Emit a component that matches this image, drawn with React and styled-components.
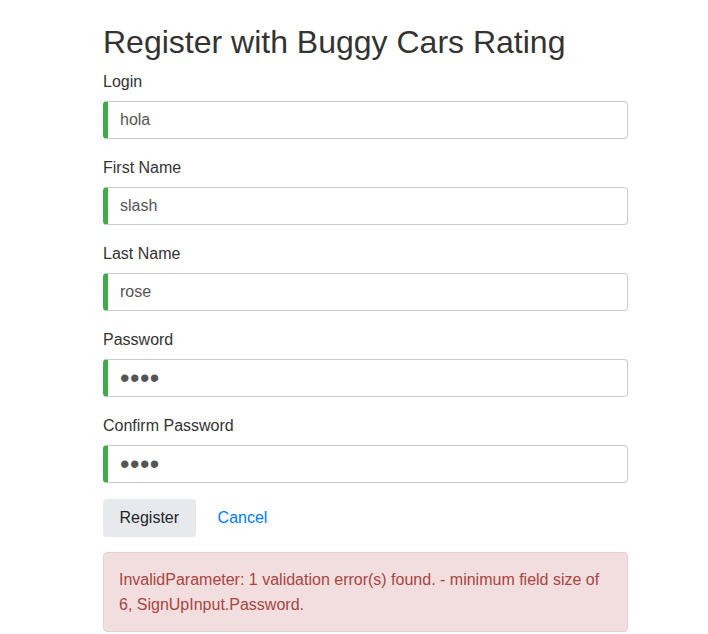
import styled, { createGlobalStyle } from "styled-components";

const GlobalStyle = createGlobalStyle`
  body {
    margin: 0;
    background: #fff;
    font-family: "Liberation Sans", Arial, sans-serif;
    font-size: 16px;
    line-height: 1.5;
    color: #333;
  }
  * { box-sizing: border-box; }
`;

const fields = [
  { id: "login", label: "Login", value: "hola", type: "text" },
  { id: "firstName", label: "First Name", value: "slash", type: "text" },
  { id: "lastName", label: "Last Name", value: "rose", type: "text" },
  { id: "password", label: "Password", value: "hola", type: "password" },
  { id: "confirmPassword", label: "Confirm Password", value: "hola", type: "password" },
];

const App = () => {
  return (
    <>
      <GlobalStyle />
      <Page>
        <Title>Register with Buggy Cars Rating</Title>
        <form onSubmit={(e) => e.preventDefault()}>
          {fields.map((f) => (
            <FormGroup key={f.id}>
              <Label htmlFor={f.id}>{f.label}</Label>
              <Input id={f.id} type={f.type} defaultValue={f.value} valid />
            </FormGroup>
          ))}
          <Actions>
            <Button type="submit">Register</Button>
            <CancelLink href="#">Cancel</CancelLink>
          </Actions>
          <Alert>
            InvalidParameter: 1 validation error(s) found. - minimum field size of 6,
            SignUpInput.Password.
          </Alert>
        </form>
      </Page>
    </>
  );
};

export default App;

const Page = styled.div`
  width: 525px;
  margin-left: 103px;
  padding-top: 23px;
`;

const Title = styled.h1`
  margin: 0 0 9px;
  font-size: 32px;
  font-weight: 400;
  line-height: 1.2;
  color: #333;
`;

const FormGroup = styled.div`
  margin-bottom: 17px;
`;

const Label = styled.label`
  display: block;
  margin-bottom: 7px;
  color: #333;
`;

const Input = styled.input`
  display: block;
  width: 100%;
  height: 38px;
  padding: 6px 12px;
  font-family: inherit;
  font-size: ${({ type }) => (type === "password" ? "27px" : "16px")};
  letter-spacing: ${({ type }) => (type === "password" ? "0.5px" : "normal")};
  color: #555;
  background: #fff;
  border: 1px solid #ccc;
  border-left: ${({ valid }) => (valid ? "5px solid #42a948" : "1px solid #ccc")};
  border-radius: 4px;
  outline: none;
`;

const Actions = styled.div`
  display: flex;
  align-items: center;
  gap: 22px;
  margin-top: -1px;
`;

const Button = styled.button`
  height: 38px;
  padding: 6px 15.5px;
  font-family: inherit;
  font-size: 16px;
  color: #212529;
  background: #e8e9ed;
  border: 1px solid transparent;
  border-radius: 4px;
`;

const CancelLink = styled.a`
  color: #007bff;
  text-decoration: none;
`;

const Alert = styled.div`
  margin-top: 15px;
  padding: 14px 15px;
  color: #a94442;
  background: #f2dede;
  border: 1px solid #ebccd1;
  border-radius: 4px;
  line-height: 25px;
`;
